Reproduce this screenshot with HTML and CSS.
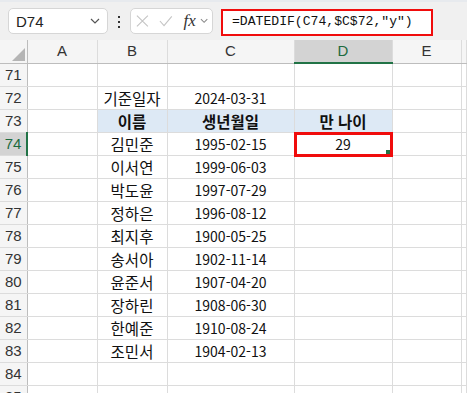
FILE: index.html
```html
<!DOCTYPE html>
<html lang="ko">
<head>
    <meta charset="UTF-8">
    <meta name="viewport" content="width=device-width, initial-scale=1.0">
    <title>만 나이 계산</title>
    <link rel="stylesheet" href="styles.css">
</head>
<body>
    <div class="ribbon">
        <div class="name-box">
            <span>D74</span>
            <svg class="chev" width="10" height="6" viewBox="0 0 10 6"><path d="M1 1 L5 5 L9 1" fill="none" stroke="#555" stroke-width="1.2"/></svg>
        </div>
        <div class="dots">
            <svg width="4" height="12" viewBox="0 0 4 12"><rect x="1" y="0" width="2" height="2" fill="#333"/><rect x="1" y="5" width="2" height="2" fill="#333"/><rect x="1" y="10" width="2" height="2" fill="#333"/></svg>
        </div>
        <div class="func-box">
            <svg width="14" height="14" viewBox="0 0 14 14"><path d="M1 1 L13 13 M13 1 L1 13" stroke="#c4c4c4" stroke-width="1.2"/></svg>
            <svg class="check" width="15" height="12" viewBox="0 0 15 12"><path d="M1 6 L5.5 11 L14 1" fill="none" stroke="#c4c4c4" stroke-width="1.2"/></svg>
            <span class="fx">fx</span>
            <svg width="9" height="6" viewBox="0 0 9 6"><path d="M1 1 L4.5 4.5 L8 1" fill="none" stroke="#888" stroke-width="1.1"/></svg>
        </div>
        <div class="formula">=DATEDIF(C74,$C$72,"y")</div>
    </div>

    <table class="sheet">
        <colgroup>
            <col class="w-head">
            <col class="w-a">
            <col class="w-b">
            <col class="w-c">
            <col class="w-d">
            <col class="w-e">
            <col>
        </colgroup>
        <tr class="col-heads">
            <th class="corner"><span class="tri"></span></th>
            <th>A</th>
            <th>B</th>
            <th>C</th>
            <th class="active-col">D</th>
            <th>E</th>
            <th></th>
        </tr>
        <tr><th>71</th><td></td><td></td><td></td><td></td><td></td><td></td></tr>
        <tr><th>72</th><td></td><td>기준일자</td><td class="num">2024-03-31</td><td></td><td></td><td></td></tr>
        <tr class="title-row"><th>73</th><td></td><td class="fill">이름</td><td class="fill">생년월일</td><td class="fill">만 나이</td><td></td><td></td></tr>
        <tr><th class="active-row">74</th><td></td><td>김민준</td><td class="num">1995-02-15</td><td class="selected num"><span>29</span><div class="red-box"><i class="handle"></i></div></td><td></td><td></td></tr>
        <tr><th>75</th><td></td><td>이서연</td><td class="num">1999-06-03</td><td></td><td></td><td></td></tr>
        <tr><th>76</th><td></td><td>박도윤</td><td class="num">1997-07-29</td><td></td><td></td><td></td></tr>
        <tr><th>77</th><td></td><td>정하은</td><td class="num">1996-08-12</td><td></td><td></td><td></td></tr>
        <tr><th>78</th><td></td><td>최지후</td><td class="num">1900-05-25</td><td></td><td></td><td></td></tr>
        <tr><th>79</th><td></td><td>송서아</td><td class="num">1902-11-14</td><td></td><td></td><td></td></tr>
        <tr><th>80</th><td></td><td>윤준서</td><td class="num">1907-04-20</td><td></td><td></td><td></td></tr>
        <tr><th>81</th><td></td><td>장하린</td><td class="num">1908-06-30</td><td></td><td></td><td></td></tr>
        <tr><th>82</th><td></td><td>한예준</td><td class="num">1910-08-24</td><td></td><td></td><td></td></tr>
        <tr><th>83</th><td></td><td>조민서</td><td class="num">1904-02-13</td><td></td><td></td><td></td></tr>
        <tr><th>84</th><td></td><td></td><td></td><td></td><td></td><td></td></tr>
        <tr><th>85</th><td></td><td></td><td></td><td></td><td></td><td></td></tr>
    </table>
</body>
</html>
```

FILE: styles.css
```css
body {
    margin: 0;
    background: #fff;
    font-family: "Noto Sans CJK KR", "Noto Sans", sans-serif;
    overflow: hidden;
}
.ribbon {
    display: flex;
    align-items: center;
    height: 40px;
    box-sizing: border-box;
    padding: 0 8px;
    background: #f0f0f0;
    border-top: 2px solid #e7eaee;
}
.name-box {
    display: flex;
    align-items: center;
    justify-content: space-between;
    width: 100px;
    height: 26px;
    box-sizing: border-box;
    padding: 0 7px 0 7px;
    background: #fff;
    border: 1px solid #d6d6d6;
    border-radius: 5px;
    font-family: "Liberation Sans", sans-serif;
    font-size: 15px;
    color: #222;
}
.dots {
    width: 22px;
    display: flex;
    justify-content: center;
    padding-top: 1px;
}
.func-box {
    display: flex;
    align-items: center;
    width: 83px;
    height: 26px;
    box-sizing: border-box;
    padding: 0 4px 0 5px;
    gap: 8px;
    background: #fff;
    border: 1px solid #d6d6d6;
    border-radius: 5px;
}
.func-box .check {
    margin-left: 2px;
}
.fx {
    font-family: "Liberation Serif", serif;
    font-style: italic;
    font-size: 17px;
    color: #333;
    margin-left: 3px;
    margin-right: -4px;
}
.formula {
    margin-left: 8px;
    width: 212px;
    height: 27px;
    box-sizing: border-box;
    padding: 3px 0 0 9px;
    background: #fff;
    border: 2px solid #f00c0c;
    font-family: "Liberation Mono", monospace;
    font-size: 13.1px;
    color: #111;
    margin-top: 2px;
}

.sheet {
    border-collapse: collapse;
    table-layout: fixed;
    width: 467px;
}
.w-head { width: 27px; }
.w-a { width: 70px; }
.w-b { width: 70px; }
.w-c { width: 127px; }
.w-d { width: 98px; }
.w-e { width: 69px; }

.sheet td,
.sheet th {
    height: 22px;
    padding: 0;
    border: 1px solid #dcdcdc;
    font-size: 15.5px;
    font-weight: normal;
    text-align: center;
    color: #111;
    white-space: nowrap;
    line-height: 22px;
}
.sheet td.num {
    font-size: 14px;
}
.sheet tr > :first-child {
    border-left: none;
}
.sheet th {
    background: #f5f5f5;
    color: #333;
    font-family: "Liberation Sans", sans-serif;
    font-size: 15px;
}
.sheet tr > th:first-child {
    border-right: 1px solid #bdbdbd;
    text-align: center;
}
.col-heads th {
    height: 21px;
    border-top: none;
    border-bottom: 1px solid #bdbdbd;
}
.corner {
    position: relative;
}
.tri {
    position: absolute;
    right: 2px;
    bottom: 2px;
    width: 0;
    height: 0;
    border-left: 13px solid transparent;
    border-bottom: 13px solid #b5b5b5;
}
.sheet .col-heads .active-col {
    background: #d3d3d3;
    color: #1d6b3f;
    border-bottom: 2px solid #217346;
}
.sheet tr > th.active-row {
    background: #d3d3d3;
    color: #1d6b3f;
    border-right: 2px solid #217346;
}
.title-row .fill {
    background: #dde9f5;
    font-weight: bold;
}
.selected {
    position: relative;
}
.red-box {
    position: absolute;
    left: -1px;
    top: -1px;
    right: -1px;
    bottom: -2px;
    border: 3px solid #f00c0c;
}
.handle {
    position: absolute;
    right: 0;
    bottom: 0;
    width: 4px;
    height: 4px;
    background: #217346;
}
```
